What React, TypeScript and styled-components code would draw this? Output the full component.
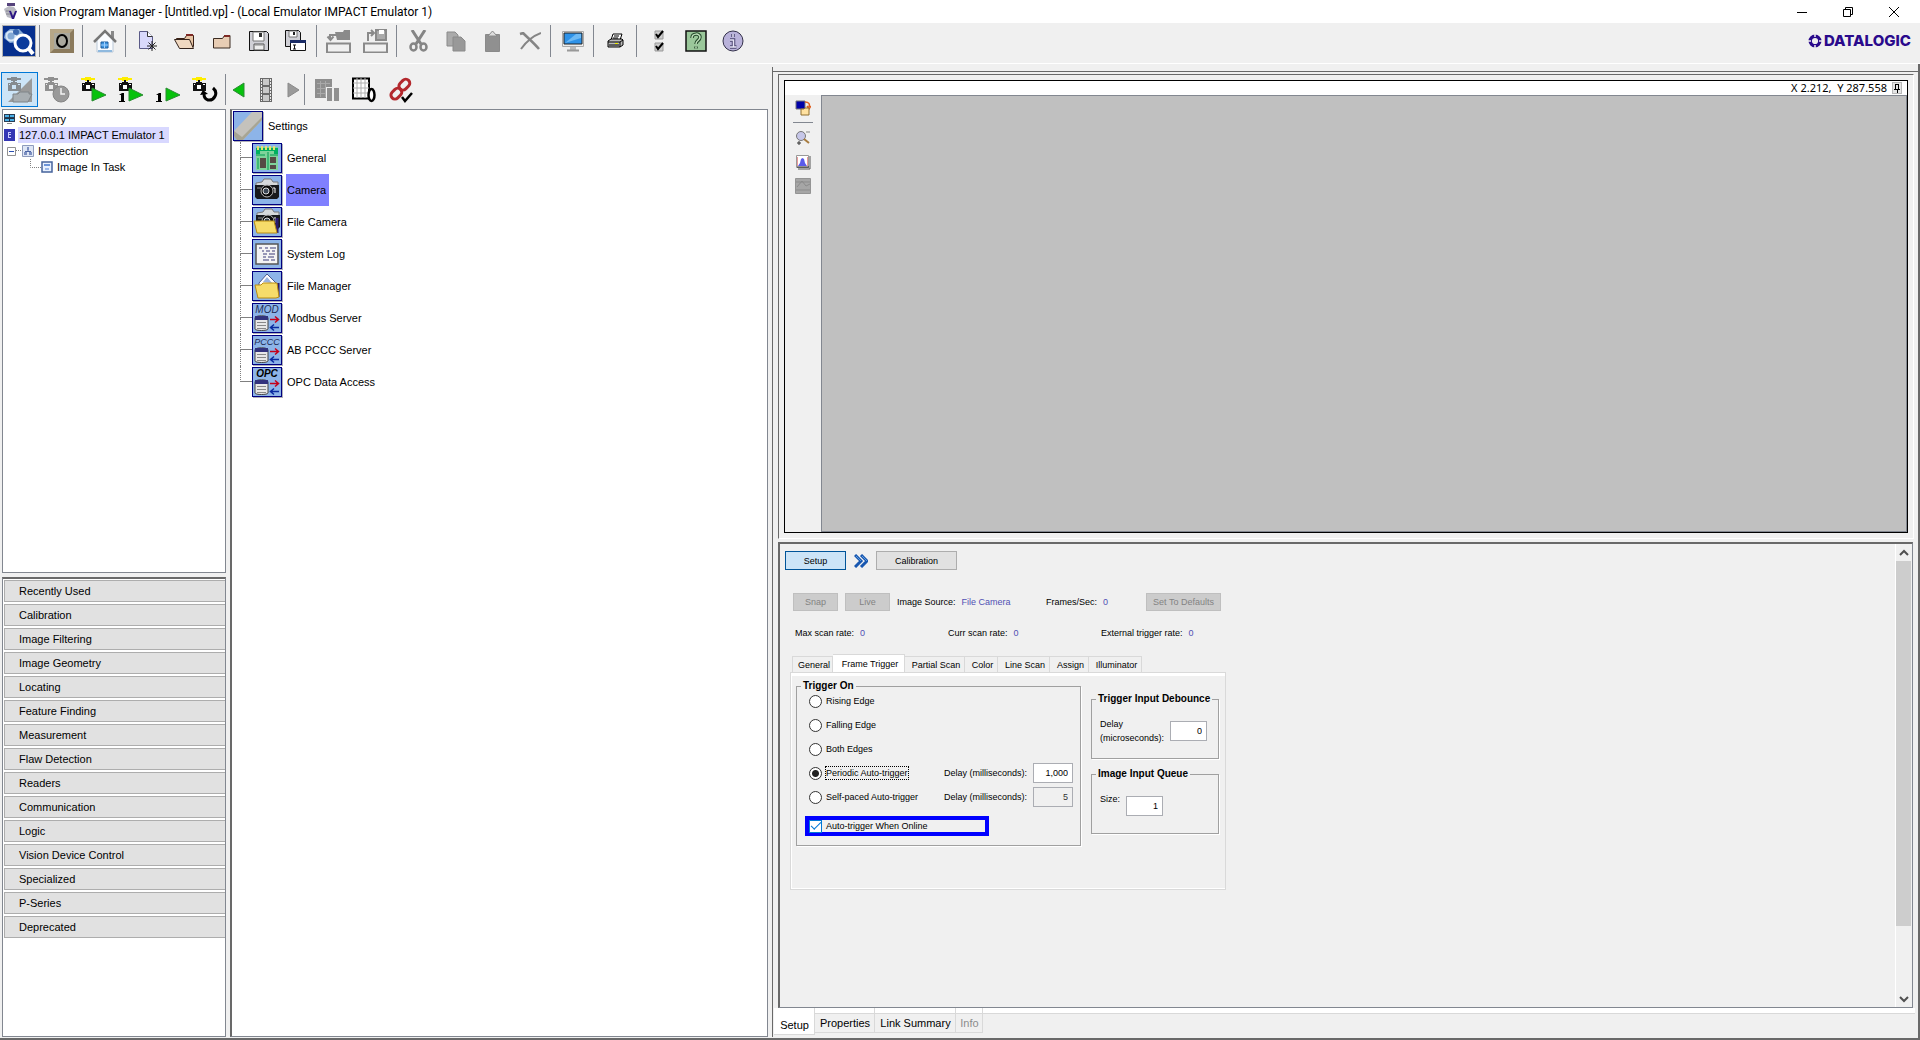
import React, { useState } from "react";
import styled, { createGlobalStyle, css } from "styled-components";

const face = "#f0f0f0";
const line = "#828790";
const dark = "#696969";
const ui = '"Liberation Sans", Arial, sans-serif';

const GlobalStyle = createGlobalStyle`
  * { box-sizing: border-box; }
  body { margin: 0; background: ${face}; color: #000; font: 11px/16px ${ui}; overflow: hidden; }
  button, input { font: inherit; color: inherit; margin: 0; padding: 0; border: 0; border-radius: 0; background: none; }
  svg { display: block; flex: none; }
  ul { list-style: none; margin: 0; padding: 0; }
`;

/* ---------- window frame ---------- */

const Window = styled.div`
  display: flex;
  flex-direction: column;
  height: 100vh;
`;

const TitleBar = styled.header`
  display: flex;
  align-items: center;
  flex: none;
  height: 23px;
  padding: 0 3px 0 4px;
  background: #fff;
`;

const Title = styled.h1`
  flex: 1;
  margin: 0 0 0 5px;
  font: 12px/20px Roboto, "Open Sans", sans-serif;
`;

const WindowButton = styled.button`
  display: grid;
  place-items: center;
  width: 46px;
  height: 20px;
`;

const Bar = styled.div`
  display: flex;
  align-items: flex-start;
  flex: none;
  height: 41px;
  padding: 2px 9px 0 0;
  border-bottom: 1px solid #fff;
`;

const RunBar = styled.div`
  display: flex;
  align-items: flex-start;
  flex: none;
  height: 45px;
  padding: 8px 0 0 1px;
`;

const ToolButton = styled.button<{ $on?: boolean; $narrow?: boolean; $tall?: boolean }>`
  display: grid;
  place-items: center;
  flex: none;
  width: ${(p) => (p.$narrow ? 18 : 37)}px;
  height: ${(p) => (p.$tall ? 35 : 32)}px;
  ${(p) => p.$on && css`background: #cce4f7; border: 1px solid #0078d7;`}
`;

const Separator = styled.span<{ $tall?: boolean }>`
  flex: none;
  width: 1px;
  height: ${(p) => (p.$tall ? 31 : 32)}px;
  margin: ${(p) => (p.$tall ? 2 : 0)}px 3px 0 2px;
  background: ${line};
`;

const Brand = styled.div`
  display: flex;
  align-items: center;
  gap: 2px;
  margin-left: auto;
  height: 32px;
  color: #2a0a8c;
  font: 800 15px/16px Inter, sans-serif;
`;

const Body = styled.main`
  display: grid;
  grid-template-columns: 40vw minmax(0, 1fr);
  flex: 1;
  min-height: 0;
  padding-bottom: 1px;
  border-right: 2px solid ${dark};
  border-bottom: 2px solid ${dark};
`;

const LeftSide = styled.section`
  display: flex;
  flex-direction: column;
  min-height: 0;
`;

const Columns = styled.div`
  display: grid;
  grid-template-columns: 224px minmax(0, 1fr);
  gap: 4px;
  flex: 1;
  min-height: 0;
  padding-left: 2px;
`;

const Stack = styled.div`
  display: grid;
  grid-template-rows: 464px minmax(0, 1fr);
  gap: 4px;
  min-height: 0;
`;

const Pane = styled.div<{ $heavyLeft?: boolean; $heavyTop?: boolean }>`
  min-height: 0;
  overflow: hidden;
  background: #fff;
  border: 1px solid ${line};
  ${(p) => p.$heavyLeft && css`border-left: 2px solid ${dark};`}
  ${(p) => p.$heavyTop && css`border-top: 2px solid ${dark};`}
`;

/* ---------- trees ---------- */

const DeviceTree = styled.ul`
  padding-top: 1px;
`;

const TreeRow = styled.li<{ $indent: number }>`
  display: flex;
  align-items: center;
  height: 16px;
  padding-left: ${(p) => p.$indent}px;
`;

const TreeLabel = styled.span<{ $selected?: boolean }>`
  margin-left: 3px;
  padding: 0 4px 0 1px;
  background: ${(p) => (p.$selected ? "#d8d8ff" : "transparent")};
`;

const SettingRow = styled.li`
  display: flex;
  align-items: center;
  height: 32px;
  padding-left: 1px;
`;

const Branch = styled.span<{ $last?: boolean }>`
  display: grid;
  grid-template-rows: 16px 16px;
  width: 12px;
  margin-left: 7px;
  &::before { content: ""; border-left: 1px dotted #808080; border-bottom: 1px solid #808080; }
  &::after { content: ""; border-left: ${(p) => (p.$last ? "0" : "1px dotted #808080")}; }
`;

const SettingIcon = styled.span`
  display: grid;
  width: 30px;
  height: 30px;
  background: #8db4e8;
  border: 1px solid #000080;
  box-shadow: 1px 1px 0 #b0b0b8;
`;

const SettingLabel = styled.span<{ $selected?: boolean }>`
  margin-left: 4px;
  padding: 0 3px 0 1px;
  line-height: 32px;
  background: ${(p) => (p.$selected ? "#8080ff" : "transparent")};
`;

const Palette = styled.div`
  display: grid;
  gap: 2px;
  padding: 1px 0 0 1px;
`;

const PaletteButton = styled.button`
  height: 22px;
  padding-left: 14px;
  text-align: left;
  background: #e1e1e1;
  border: 1px solid #adadad;
  border-right: 0;
`;

/* ---------- right side ---------- */

const RightSide = styled.section`
  display: flex;
  flex-direction: column;
  min-height: 0;
  margin: 3px 0 0 4px;
  border-left: 1px solid ${dark};
`;

const RightTop = styled.div`
  flex: none;
  height: 5px;
  border-bottom: 1px solid ${dark};
`;

const ViewFrame = styled.div`
  display: flex;
  flex: 459 1 0;
  min-height: 0;
  margin: 2px 4px 0 5px;
  padding: 5px;
  border: 1px solid #fff;
  border-top-color: ${dark};
  border-left-color: ${dark};
`;

const Viewer = styled.div`
  display: grid;
  grid-template: 14px minmax(0, 1fr) / 36px minmax(0, 1fr);
  flex: 1;
  border: 1px solid #000;
`;

const Coordinates = styled.output`
  display: flex;
  grid-column: 1 / -1;
  justify-content: flex-end;
  align-items: center;
  gap: 5px;
  padding-right: 5px;
  background: #fff;
  white-space: pre;
  font: 11px/14px "Noto Sans", Verdana, sans-serif;
`;

const PinButton = styled.button`
  display: grid;
  place-items: center;
  width: 10px;
  height: 12px;
  background: #e4e4e4;
  border: 1px solid #b8b8b8;
`;

const ViewTools = styled.div`
  display: flex;
  flex-direction: column;
  align-items: center;
  gap: 8px;
  padding-top: 5px;
`;

const ViewToolButton = styled.button`
  width: 16px;
  height: 16px;
`;

const ViewRule = styled.span`
  width: 20px;
  height: 1px;
  margin: -2px 0 -1px;
  background: ${line};
`;

const Canvas = styled.div`
  background: #c0c0c0;
  border: 1px solid ${line};
`;

const SetupFrame = styled.div`
  display: flex;
  flex: 469 1 0;
  min-height: 0;
  margin: 3px 5px 0 5px;
  border: 1px solid ${line};
  border-left: 2px solid ${dark};
  border-top: 2px solid ${dark};
`;

const SetupContent = styled.div`
  flex: 1;
  padding: 7px 0 0 5px;
  font-size: 9px;
  line-height: 14px;
`;

const ScrollTrack = styled.div`
  display: flex;
  flex-direction: column;
  align-items: stretch;
  width: 17px;
  border-left: 1px solid #fff;
`;

const ScrollButton = styled.button`
  display: grid;
  place-items: center;
  height: 17px;
`;

const ScrollLane = styled.div`
  flex: 1;
  padding-right: 1px;
`;

const ScrollThumb = styled.div`
  height: 85%;
  background: #cdcdcd;
`;

const Line = styled.div<{ $top?: number; $left?: number }>`
  display: flex;
  align-items: center;
  padding: ${(p) => p.$top ?? 0}px 0 0 ${(p) => p.$left ?? 0}px;
`;

const StepButton = styled.button<{ $active?: boolean; $wide?: boolean }>`
  width: ${(p) => (p.$wide ? 81 : 61)}px;
  height: 19px;
  background: ${(p) => (p.$active ? "#cce4f7" : "#e1e1e1")};
  border: 1px solid ${(p) => (p.$active ? "#005499" : "#adadad")};
`;

const StepArrow = styled.span`
  padding: 0 8px;
`;

const GreyButton = styled.button<{ $wide?: boolean }>`
  width: ${(p) => (p.$wide ? 75 : 45)}px;
  height: 18px;
  margin-right: ${(p) => (p.$wide ? 0 : 7)}px;
  white-space: nowrap;
  color: #838383;
  background: #cccccc;
  border: 1px solid #bfbfbf;
`;

const Reading = styled.span<{ $width: number }>`
  flex: none;
  width: ${(p) => p.$width}px;
  white-space: nowrap;
`;

const Value = styled.span`
  margin-left: 6px;
  color: #5050b4;
`;

const TabList = styled.div`
  display: flex;
  align-items: flex-end;
  height: 18px;
  padding-left: 2px;
`;

const Tab = styled.button<{ $active?: boolean; $width: number }>`
  width: ${(p) => p.$width}px;
  height: ${(p) => (p.$active ? 18 : 16)}px;
  padding-left: 3px;
  white-space: nowrap;
  background: ${(p) => (p.$active ? "#fff" : face)};
  border: 1px solid #d9d9d9;
  border-bottom: 0;
  & + & { border-left-width: ${(p) => (p.$active ? 1 : 0)}px; }
`;

const TabPanel = styled.div`
  display: flex;
  align-items: flex-start;
  gap: 10px;
  width: 436px;
  height: 218px;
  padding: 6px 6px 0 5px;
  border: 1px solid #d9d9d9;
  box-shadow: inset 0 3px 0 #fff, inset 1px 0 0 #fff, inset 0 -1px 0 #fff;
`;

const Group = styled.fieldset<{ $width: number; $height: number }>`
  width: ${(p) => p.$width}px;
  height: ${(p) => p.$height}px;
  min-width: 0;
  margin: 0;
  padding: 0 7px 0 8px;
  border: 1px solid #a0a0a0;
  box-shadow: 1px 1px 0 #fff;
`;

const Legend = styled.legend`
  margin: 0 -6px 0 -4px;
  padding: 0 2px;
  font: bold 10px/14px ${ui};
  white-space: nowrap;
`;

const SideGroups = styled.div`
  display: grid;
  gap: 8px;
  padding-top: 13px;
`;

const Choices = styled.div`
  display: grid;
  grid-auto-rows: 24px;
  margin: -4px 0 0 4px;
`;

const ChoiceRow = styled.div`
  display: flex;
  align-items: center;
  justify-content: space-between;
`;

const ChoiceLabel = styled.label`
  display: flex;
  align-items: center;
  gap: 4px;
  white-space: nowrap;
`;

const Focusable = styled.span<{ $focus?: boolean }>`
  line-height: 12px;
  ${(p) => p.$focus && css`outline: 1px dotted #000;`}
`;

const Radio = styled.input`
  appearance: none;
  width: 13px;
  height: 13px;
  background: #fff;
  border: 1px solid #333;
  border-radius: 50%;
  &:checked { background: radial-gradient(circle, #222 0 3px, #fff 4px); }
`;

const Tick = styled.input`
  appearance: none;
  display: grid;
  place-items: center;
  width: 13px;
  height: 13px;
  background: #fff;
  border: 1px solid #0078d7;
  &:checked::after {
    content: "";
    width: 9px;
    height: 4px;
    margin-top: -3px;
    border: solid #0078d7;
    border-width: 0 0 1px 1px;
    transform: rotate(-45deg);
  }
`;

const Highlight = styled.div`
  display: flex;
  align-items: center;
  width: 184px;
  height: 20px;
  margin-top: 7px;
  border: 4px solid #0000ff;
`;

const DelayLabel = styled.label`
  display: flex;
  align-items: center;
  gap: 6px;
  white-space: nowrap;
`;

const NumberBox = styled.input<{ $wide?: boolean }>`
  width: ${(p) => (p.$wide ? 40 : 37)}px;
  height: 20px;
  padding-right: 4px;
  text-align: right;
  background: #fff;
  border: 1px solid #abadb3;
  &:disabled { background: ${face}; color: #333; }
`;

const SideField = styled.label`
  display: flex;
  align-items: flex-start;
  gap: 6px;
  padding-top: 11px;
  ${NumberBox} { margin-top: 4px; }
`;

const BottomTabs = styled.nav`
  display: flex;
  align-items: flex-start;
  flex: none;
  height: 29px;
  padding-left: 1px;
`;

const BottomFill = styled.div`
  flex: 1;
  height: 6px;
  margin-right: 3px;
  background: #fff;
  border-bottom: 1px solid #d9d9d9;
`;

const BottomTab = styled.button<{ $active?: boolean; $width: number }>`
  width: ${(p) => p.$width}px;
  height: ${(p) => (p.$active ? 27 : 25)}px;
  padding: ${(p) => (p.$active ? 7 : 5)}px 0 0 1px;
  background: ${(p) => (p.$active ? "#fff" : `linear-gradient(#fff 5px, #d9d9d9 5px, #d9d9d9 6px, ${face} 6px)`)};
  border: solid #d9d9d9;
  border-width: 0 1px 1px 0;
  &:disabled { color: #8c8c8c; }
`;

/* ---------- drawings ---------- */

const grey = "#8a8a8a";
const svg = (w: number, h: number, body: React.ReactNode, crisp = false) => (
  <svg width={w} height={h} viewBox={`0 0 ${w} ${h}`} fill="none" shapeRendering={crisp ? "crispEdges" : "auto"} aria-hidden="true">{body}</svg>
);

const Cam = ({ c = "#111", y = "#ffee00", lens = "#fff" }: { c?: string; y?: string; lens?: string }) => (
  <g shapeRendering="crispEdges">
    <path d="M0 1h14v2H0zM4 0h6v4H4z" fill={y} /><path d="M6 3h2v2H6z" fill={c} />
    <path d="M1 6h3V5h6v1h4v8H1z" fill={c} /><path d="M5 8h4v4H5zM2 7h1v1H2zM11 7h2v1h-2z" fill={lens} />
  </g>
);
const play = (x: number, y: number) => <path d={`M${x} ${y}l14 7-14 6z`} fill="#06c20c" stroke="#2a8b32" />;
const one = (x: number, y: number) => <path d={`M${x} ${y + 2}l3-2h2v8h1v1h-6v-1h2v-6h-2z`} fill="#000" />;

const I: Record<string, React.ReactNode> = {
  app: svg(14, 18, <><path d="M3 0h8v3H3z" fill="#56437c" /><path d="M0 6l5-3 5 1 3 4-4 8-6-2z" fill="#b9b9c2" /><path d="M2 8h5M2 11h4" stroke="#84848e" /><path d="M5 8h2l2 5 2-5h2l-3 8H8z" fill="#2b1583" /></>),
  min: svg(10, 10, <path d="M0 5.5h10" stroke="#000" />),
  max: svg(10, 10, <path d="M.5 2.5h7v7h-7zM2.500 2V.5h7v7H8" stroke="#000" />),
  close: svg(10, 10, <path d="M0 0l10 10M10 0L0 10" stroke="#000" />),
  vision: svg(34, 32, <><path d="M0 0h34v32H0z" fill="#062f8e" stroke="#b2b2b2" strokeWidth="2" /><path d="M3 8l5-4h9l4 4-5 9-8 1-6-5z" fill="#84a9d5" /><circle cx="9" cy="11" r="4.500" stroke="#d7e6f7" strokeWidth="2" /><circle cx="14" cy="7" r="3" fill="#3b68ae" /><circle cx="21" cy="18" r="8" fill="#0b3b9c" stroke="#fff" strokeWidth="3" /><path d="M27 24l4 5" stroke="#fff" strokeWidth="4" /></>),
  offline: svg(24, 24, <><path d="M0 0h24v24H0z" fill="#8b7a5c" /><path d="M0 0h24l-4 4H4v16l-4 4z" fill="#b5a687" /><path d="M4 4h16v16H4z" fill="#a9a89e" /><ellipse cx="12" cy="12" rx="5" ry="6" stroke="#000" strokeWidth="2" /></>),
  home: svg(24, 24, <><path d="M18 2h3v8h-3z" fill="#888" /><path d="M4 11l8-8 8 8v12H4z" fill="#fafcff" stroke="#b9c8d8" /><path d="M1 13L12 2l11 11" stroke="#777" strokeWidth="2.500" /><path d="M8 13h7v6H8z" fill="#3e94e0" stroke="#1e5f9f" /><path d="M11.500 13v6M8 16h7" stroke="#9fd0ff" /><path d="M5 22h14" stroke="#8fb9de" strokeWidth="2" /></>),
  newDoc: svg(20, 22, <><path d="M1.500 1.500h8l5 5v12h-13z" fill="#d9d9fb" stroke="#5a5a88" /><path d="M9.500 1.500v5h5" fill="#fff" stroke="#333" /><path d="M14 11v10M9 16h10M10.500 12.500l7 7M17.500 12.500l-7 7" stroke="#222" /></>),
  open: svg(22, 18, <><path d="M2.500 6.500h8l2-3h7v11h-14z" fill="#e7c5a5" stroke="#3a2015" /><path d="M12 3h7" stroke="#7e2a25" strokeWidth="2" /><path d="M.5 7.500h15l4 9h-14z" fill="#f0d8c0" stroke="#33231b" /></>),
  folder: svg(18, 16, <><path d="M.5 5.500h9l2-3h5.500v12.500H.5z" fill="#e8cdb4" stroke="#3a2a20" /><path d="M11 3h6" stroke="#7e2a25" strokeWidth="2" /></>),
  save: svg(20, 20, <><path d="M.5.5h17l2 2v17H.5z" fill="#d0d0d6" stroke="#111" /><path d="M4 1h11v9H4z" fill="#fff" stroke="#777" /><path d="M10 2h3v4h-3z" fill="#333" /><path d="M5 13h10v6H5z" fill="#eee" stroke="#555" /><path d="M6 14h8" stroke="#888" /></>),
  saveAll: svg(21, 22, <><path d="M.5.5h13l2 2v14H.5z" fill="#d0d0d6" stroke="#111" /><path d="M4 1h8v6H4z" fill="#fff" stroke="#777" /><path d="M8 2h2v3H8z" fill="#222" /><path d="M5.500 10.500h15v10h-15z" fill="#fff" stroke="#111" /><path d="M5 10h16v3H5z" fill="#1b2c66" /><path d="M8 15h3M9.500 15v4M8 19h3" stroke="#111" /></>),
  upload: svg(25, 24, <><path d="M1 14.500h23v9H1z" stroke={grey} strokeWidth="2" /><path d="M9 3h8l1-2h6v10H11z" fill={grey} /><path d="M4 10V6h6M1.500 7.500L4.500 11l3-3.500" stroke={grey} strokeWidth="2" /></>),
  download: svg(25, 24, <><path d="M1 14.500h23v9H1z" stroke={grey} strokeWidth="2" /><path d="M13 1h10v10H13z" fill="#aaa" stroke={grey} strokeWidth="2" /><path d="M16 1h5v4h-5z" fill="#fff" /><path d="M5 12V4h5M8 1l3 3-3 3" stroke={grey} strokeWidth="2" /></>),
  cut: svg(19, 22, <><path d="M3 0l9 14M16 0L7 14" stroke="#858585" strokeWidth="3" /><ellipse cx="4.500" cy="17" rx="3" ry="3.500" stroke="#858585" strokeWidth="2.500" /><ellipse cx="14.500" cy="17" rx="3" ry="3.500" stroke="#858585" strokeWidth="2.500" /></>),
  copy: svg(20, 21, <><path d="M1 1h8l3 3v11H1z" fill="#aaa" stroke={grey} /><path d="M7 6h8l4 4v10H7z" fill="#999" stroke={grey} /></>),
  paste: svg(15, 22, <><path d="M.5 4.500h14v17H.5z" fill="#909090" stroke={grey} /><path d="M3 6l4.500-5L12 6z" fill="#ddd" stroke={grey} /></>),
  del: svg(22, 18, <><path d="M1 2l3-1c5 5 10 9 16 16" stroke="#858585" strokeWidth="2.500" /><path d="M22 1C14 4 7 10 2 17" stroke="#858585" strokeWidth="2" /></>),
  monitor: svg(22, 22, <><path d="M.5 1.500h21v15H.5z" fill="#ececec" stroke="#aaa" /><path d="M2 3h18v11H2z" fill="#2e92e8" stroke="#222" /><path d="M3 13L14 4h5v4z" fill="#6db9f4" /><path d="M8 17h6v3H8z" fill="#bbb" /><path d="M5 20.500h12" stroke="#999" strokeWidth="2" /></>),
  print: svg(17, 16, <><path d="M6 1h9l-2 6H4z" fill="#fff" stroke="#000" /><path d="M7 3h5M6 5h5" stroke="#000" /><path d="M1 8l3-2h11l1 1v5l-3 2H1z" fill="#bbb" stroke="#000" /><path d="M1 9h12v5M13 9l3-2M2 12h10" stroke="#000" /><path d="M8 10h3v1H8z" fill="#ee0" /></>),
  checks: svg(10, 22, <><path d="M1 1h8v8H1zM1 13h8v8H1z" fill="#ccc" stroke="#999" /><path d="M2 4l2 3 5-6M2 16l2 3 5-6" stroke="#000" strokeWidth="2" /></>),
  help: svg(22, 22, <><path d="M1 1h20v20H1z" fill="#9ac79a" stroke="#111" strokeWidth="1.500" /><path d="M7 8c0-5 8-5 8-1 0 4-4 3-4 7M11 16.500v2" stroke="#254a2c" strokeWidth="3.500" /><path d="M7 8c0-5 8-5 8-1 0 4-4 3-4 7M11 16.500v2" stroke="#bfe0bb" strokeWidth="1.500" /></>),
  info: svg(22, 22, <><circle cx="11" cy="11" r="10" fill="#b9b2da" stroke="#33304a" /><path d="M11 4v3M8 10h3.500v7M8 17h6.500" stroke="#4b4670" strokeWidth="3.500" /><path d="M11 4v3M8 10h3.500v7M8 17h6.500" stroke="#e6e3f6" strokeWidth="1.500" /></>),
  brand: svg(14, 14, <><circle cx="7" cy="7" r="4.800" stroke="#2a0a8c" strokeWidth="3.400" /><path d="M7 0v3M7 11v3M0 7h3M11 7h3" stroke={face} strokeWidth="1.500" /></>),
  runOnline: svg(26, 26, <><path d="M25 1v24H1z" fill="#9a9a9a" /><Cam c="#858b90" y="#858b90" lens="#cce4f7" /><path d="M6 17h5l2-2h9v2h3l-4 8H6z" fill="#a8aeb2" stroke="#7e8488" /></>),
  runTimed: svg(26, 26, <><Cam c="#909090" y="#909090" lens="#eee" /><circle cx="17" cy="17" r="8" fill="#9a9a9a" stroke="#858585" /><path d="M17 11v6h4" stroke="#f4f4f4" strokeWidth="1.500" /></>),
  runCam: svg(26, 26, <><Cam />{play(11, 11)}</>),
  runOnce: svg(26, 26, <><Cam />{one(1, 16)}{play(11, 11)}</>),
  one: svg(26, 26, <>{one(1, 16)}{play(11, 11)}</>),
  loop: svg(26, 26, <><Cam /><path d="M21 11c6 5 1 13-5 12-3-1-4-3-4-6" stroke="#000" strokeWidth="3" /><path d="M8 18l3-5 5 4z" fill="#000" /></>),
  prev: svg(13, 16, <path d="M12 1v14L1 8z" fill="#06c20c" stroke="#2a8b32" />),
  film: svg(14, 24, <><path d="M1 0h12v24H1z" fill="#6a6a6a" /><path d="M2.500 1v22M11.500 1v22" stroke="#eee" strokeDasharray="2 1" /><path d="M4 1h6v6H4zM4 9h6v6H4zM4 17h6v6H4z" fill="#c9c9c9" /></>, true),
  next: svg(13, 16, <path d="M1 1v14l11-7z" fill="#9a9a9a" stroke="#8a8a8a" />),
  tablePause: svg(26, 24, <><path d="M1 1h17v19H1z" fill="#8e8e8e" /><path d="M3 5h13M3 10h13M3 15h13M6 3v16M11 3v16" stroke="#a9a9a9" /><path d="M12 9h7v15h-7zM19 9h7v15h-7z" fill="#efefef" /><path d="M13 10h5v13h-5zM20 10h5v13h-5z" fill="#909090" /></>, true),
  tableZero: svg(26, 26, <><path d="M2 1.500h16v20H2z" fill="#fff" stroke="#000" strokeWidth="2" /><path d="M2 6h16M2 11h16M2 16h16M6 1v20M10 1v20M14 1v20" stroke="#b0b0b0" /><ellipse cx="20.500" cy="18" rx="3" ry="6" fill="#fff" stroke="#000" strokeWidth="2.500" /></>),
  link: svg(26, 26, <><g stroke="#b3282d" strokeWidth="3"><rect x="-5.500" y="-4" width="12" height="8" rx="4" transform="translate(8 17) rotate(-45)" /><rect x="-5.500" y="-4" width="12" height="8" rx="4" transform="translate(16 8) rotate(-45)" /></g><path d="M14 20l3 4 7-8" stroke="#000" strokeWidth="2.500" /></>),
  tSummary: svg(11, 12, <><path d="M0 1h11v8H0z" fill="#2a3d55" /><path d="M1 2h9v2H1zM1 5h9v3H1z" fill="#4ab0e8" /><path d="M5 1v8M1 5h9" stroke="#1d3145" /><path d="M3 10h5v1H3z" fill="#888" /></>, true),
  tDevice: svg(11, 12, <><path d="M0 0h11v12H0z" fill="#3437b4" /><path d="M7 3H4v5h3M4 5.500h3" stroke="#c8caff" /></>, true),
  tMinus: svg(9, 9, <><path d="M.5.5h8v8h-8z" fill="#fff" stroke="#919191" /><path d="M2 4.500h5" stroke="#2a4fb0" /></>),
  tTask: svg(12, 12, <><path d="M.5.500h11v11H.5z" fill="#dfe6f5" stroke="#8e9bbd" /><path d="M5 2h2v3H5zM2 7h3v3H2zM7 7h3v3H7z" fill="#7c8fc0" /><path d="M6 5v1M3 6.500h6" stroke="#4a64a5" /></>),
  tImage: svg(12, 12, <><path d="M1 1h10v10H1z" fill="#e8f1ff" stroke="#46639c" strokeWidth="1.500" /><path d="M3 3h6v2H3z" fill="#6d95d9" /><path d="M4 7h4v2H4z" fill="#9bb7e8" /></>),
  vLoad: svg(16, 16, <><path d="M1 1h9v8H1z" fill="#0000a8" stroke="#777" /><path d="M10 2c4 0 5 2 4 5M12 6l2 3 2-3" stroke="#e06020" strokeWidth="1.500" /><path d="M6 9h3l1-1h4v7H6z" fill="#ffe1a0" stroke="#8f6e30" /></>),
  vZoom: svg(16, 16, <><circle cx="6" cy="6" r="4.500" fill="#c6c6e8" stroke="#777" /><path d="M9 9l5 4" stroke="#a77c40" strokeWidth="2" /><path d="M11 2h4" stroke="#888" /><path d="M2 13h4M4 11v4" stroke="#333" /></>),
  vHist: svg(16, 16, <><path d="M1.500 1.500h12v12h-12z" fill="#fff" stroke="#999" /><path d="M2.500 3v9M12.500 3v9" stroke="#e79a9a" /><path d="M3 12l2-3 1-4 1.500-1L9 5l1 4 2 3z" fill="#5a5aea" /><path d="M2 13h12" stroke="#222" /><path d="M15 2v13H3" stroke="#555" /></>),
  vLine: svg(16, 16, <><path d="M.5.500h15v15H.5z" fill="#a6a6a6" stroke="#949494" /><path d="M1 4h14M1 12h14M2 9l5-6 4 5 4-2" stroke="#8b8b8b" /></>),
  pin: svg(6, 9, <path d="M1.500 0v5M4.500 0v5M0 5.500h6M3 6v3M1 .5h4" stroke="#000" />, true),
  chevrons: svg(14, 14, <><path d="M1 1l6 6-6 6M7 1l6 6-6 6" stroke="#1857b0" strokeWidth="3" /><path d="M2 2l5 5M8 2l5 5" stroke="#5a9ade" /></>),
  up: svg(10, 8, <path d="M1 6l4-4 4 4" stroke="#505050" strokeWidth="2" />),
  down: svg(10, 8, <path d="M1 2l4 4 4-4" stroke="#505050" strokeWidth="2" />),
};

const camera = <><path d="M9 6l2-3h7l2 3h5v4H3V7z" fill="#d6d9dc" stroke="#777" /><path d="M2 9h24v12l-2 2H4l-2-2z" fill="#17191c" /><circle cx="14" cy="15" r="6" fill="#0a0a0a" stroke="#bbb" /><circle cx="13" cy="15" r="3" fill="#3a4654" stroke="#ddd" /><path d="M20 12h2v5" stroke="#fff" /><path d="M4 11h4v2H4z" fill="#555" /></>;
const openFolder = <path d="M2 13h6l2-2h14l2 14-3 1H5z" fill="#f6dc6a" stroke="#b98d12" />;
const server = (name: string, bold?: boolean) => (
  <><text x="14" y="9" textAnchor="middle" fill={bold ? "#000" : "#1d2b55"} fontFamily="Liberation Sans, Arial, sans-serif" fontSize={name === "PCCC" ? 9 : 10} fontStyle="italic" fontWeight={bold ? "bold" : "normal"}>{name}</text>
    <path d="M2 14c0-3 13-3 13 0v11c0 2-13 2-13 0z" fill="#e8e8e8" stroke="#444" /><path d="M2 12h13v4H2z" fill="#33337d" /><path d="M4 18.500h9M4 21.500h9M4 24.500h9" stroke="#888" />
    <path d="M17 15.500h8M22 12.500l3.500 3-3.500 3" stroke="#c4001a" strokeWidth="1.500" /><path d="M26 23.500h-8M21 20.500l-3.500 3 3.500 3" stroke="#0a2aa0" strokeWidth="1.500" /></>
);
const S: Record<string, React.ReactNode> = {
  Settings: <><path d="M0 19L18 0h10v8L9 28H3l-3-4z" fill="#c4c2bc" /><path d="M0 19l8 6L28 5v3L9 28H3l-3-4z" fill="#a7a594" /></>,
  General: <><path d="M3 3h22v23H3z" fill="#7fd49b" /><path d="M3 4h22v6h-4v-3H7v3H3z" fill="#00b060" /><path d="M4 2h2v4H4zM8 2h2v4H8zM12 2h2v4h-2zM16 2h2v4h-2zM20 2h2v4h-2z" fill="#e8e070" /><path d="M7 14h6v10H7zM17 13h6v6h-6zM17 21h6v4h-6z" fill="#554b44" /><path d="M15 8v18M3 11h9M17 11h8M5 14v11" stroke="#009a50" /></>,
  Camera: camera,
  "File Camera": <><g transform="translate(1 -2)">{camera}</g><path d="M24 10v15" stroke="#2a1a70" strokeWidth="3" /><path d="M1 13h20l3 12H4z" fill="#f6dc6a" stroke="#b98d12" /></>,
  "System Log": <><path d="M3 4h22v20H3z" fill="#f4f4f4" stroke="#555" strokeWidth="1.500" /><path d="M6 8h3M12 8h3M17 8h6M9 11h2M13 11h4M19 11h3M10 14h4M16 14h6M10 17h3M15 17h6M10 20h6M18 20h4" stroke="#3b3b78" /></>,
  "File Manager": <><path d="M6 11L14 2l9 9v4H6z" fill="#fff" stroke="#4a5a90" /><path d="M10 10l4-5 5 6" fill="#9bb3e0" /><path d="M25 11v14" stroke="#2a1a70" strokeWidth="3" />{openFolder}</>,
  "Modbus Server": server("MOD"),
  "AB PCCC Server": server("PCCC"),
  "OPC Data Access": server("OPC", true),
};

/* ---------- data ---------- */

const mainTools = [
  "vision:Vision Program Manager", "|", "offline:Offline", "|", "home:Home", "|", "newDoc:New", "open:Open", "folder:Close", "save:Save", "saveAll:Save As", "|",
  "upload:Load", "download:Store", "|", "cut:Cut", "copy:Copy", "paste:Paste", "del:Delete", "|", "monitor:Display", "|", "print:Print", "|", "checks:Options", "help:Help", "info:About",
];
const runTools = [
  "runOnline:Online", "runTimed:Timed", "runCam:Run", "runOnce:Run Once", "one:Step", "loop:Repeat", "|", "prev:Previous", "film:Film strip", "next:Next", "|",
  "tablePause:Pause table", "tableZero:Reset table", "link:Check links",
];
const settings = ["General", "Camera", "File Camera", "System Log", "File Manager", "Modbus Server", "AB PCCC Server", "OPC Data Access"];
const palette = ["Recently Used", "Calibration", "Image Filtering", "Image Geometry", "Locating", "Feature Finding", "Measurement", "Flaw Detection", "Readers", "Communication", "Logic", "Vision Device Control", "Specialized", "P-Series", "Deprecated"];
const tabs: [string, number][] = [["General", 41], ["Frame Trigger", 72], ["Partial Scan", 60], ["Color", 33], ["Line Scan", 52], ["Assign", 39], ["Illuminator", 53]];
const triggers = ["Rising Edge", "Falling Edge", "Both Edges", "Periodic Auto-trigger", "Self-paced Auto-trigger"];
const delays: Record<string, string> = { "Periodic Auto-trigger": "1,000", "Self-paced Auto-trigger": "5" };

function Tools({ items, tall }: { items: string[]; tall?: boolean }) {
  return (
    <>
      {items.map((item, i) => {
        if (item === "|") return <Separator key={i} $tall={tall} />;
        const [id, label] = item.split(":");
        return (
          <ToolButton key={i} aria-label={label} $tall={tall} $on={id === "runOnline"} $narrow={id === "prev" || id === "next"}>
            {I[id]}
          </ToolButton>
        );
      })}
    </>
  );
}

function TriggerGroup() {
  const [trigger, setTrigger] = useState("Periodic Auto-trigger");
  return (
    <Group $width={285} $height={167}>
      <Legend>Trigger On</Legend>
      <Choices>
        {triggers.map((name) => (
          <ChoiceRow key={name}>
            <ChoiceLabel>
              <Radio type="radio" name="trigger" checked={trigger === name} onChange={() => setTrigger(name)} />
              <Focusable $focus={trigger === name}>{name}</Focusable>
            </ChoiceLabel>
            {delays[name] && (
              <DelayLabel>
                Delay (milliseconds):
                <NumberBox $wide defaultValue={delays[name]} disabled={trigger !== name} />
              </DelayLabel>
            )}
          </ChoiceRow>
        ))}
      </Choices>
      <Highlight>
        <ChoiceLabel>
          <Tick type="checkbox" defaultChecked />
          Auto-trigger When Online
        </ChoiceLabel>
      </Highlight>
    </Group>
  );
}

function SetupPanel() {
  return (
    <SetupFrame>
      <SetupContent>
        <Line>
          <StepButton $active>Setup</StepButton>
          <StepArrow>{I.chevrons}</StepArrow>
          <StepButton $wide>Calibration</StepButton>
        </Line>
        <Line $top={23} $left={8}>
          <GreyButton disabled>Snap</GreyButton>
          <GreyButton disabled>Live</GreyButton>
          <Reading $width={149}>Image Source:<Value>File Camera</Value></Reading>
          <Reading $width={100}>Frames/Sec:<Value>0</Value></Reading>
          <GreyButton $wide disabled>Set To Defaults</GreyButton>
        </Line>
        <Line $top={15} $left={10}>
          <Reading $width={153}>Max scan rate:<Value>0</Value></Reading>
          <Reading $width={153}>Curr scan rate:<Value>0</Value></Reading>
          <Reading $width={153}>External trigger rate:<Value>0</Value></Reading>
        </Line>
        <Line $top={14} $left={5}>
          <TabList role="tablist">
            {tabs.map(([name, width]) => (
              <Tab key={name} role="tab" $width={width} $active={name === "Frame Trigger"}>{name}</Tab>
            ))}
          </TabList>
        </Line>
        <Line $left={5}>
          <TabPanel role="tabpanel">
            <TriggerGroup />
            <SideGroups>
              <Group $width={128} $height={67}>
                <Legend>Trigger Input Debounce</Legend>
                <SideField>
                  <span>Delay<br />(microseconds):</span>
                  <NumberBox defaultValue="0" />
                </SideField>
              </Group>
              <Group $width={128} $height={67}>
                <Legend>Image Input Queue</Legend>
                <SideField>
                  Size:
                  <NumberBox defaultValue="1" />
                </SideField>
              </Group>
            </SideGroups>
          </TabPanel>
        </Line>
      </SetupContent>
      <ScrollTrack>
        <ScrollButton aria-label="Scroll up">{I.up}</ScrollButton>
        <ScrollLane><ScrollThumb /></ScrollLane>
        <ScrollButton aria-label="Scroll down">{I.down}</ScrollButton>
      </ScrollTrack>
    </SetupFrame>
  );
}

export default function App() {
  return (
    <Window>
      <GlobalStyle />
      <TitleBar>
        {I.app}
        <Title>Vision Program Manager - [Untitled.vp] - (Local Emulator IMPACT Emulator 1)</Title>
        <WindowButton aria-label="Minimize">{I.min}</WindowButton>
        <WindowButton aria-label="Restore">{I.max}</WindowButton>
        <WindowButton aria-label="Close">{I.close}</WindowButton>
      </TitleBar>
      <Bar>
        <Tools items={mainTools} />
        <Brand>{I.brand}DATALOGIC</Brand>
      </Bar>
      <Body>
        <LeftSide>
          <RunBar>
            <Tools items={runTools} tall />
          </RunBar>
          <Columns>
            <Stack>
              <Pane>
                <DeviceTree role="tree">
                  <TreeRow $indent={1}>{I.tSummary}<TreeLabel>Summary</TreeLabel></TreeRow>
                  <TreeRow $indent={1}>{I.tDevice}<TreeLabel $selected>127.0.0.1 IMPACT Emulator 1</TreeLabel></TreeRow>
                  <TreeRow $indent={4}>
                    {I.tMinus}
                    {svg(6, 2, <path d="M0 .5h6" stroke="#808080" strokeDasharray="1 1" />)}
                    {I.tTask}
                    <TreeLabel>Inspection</TreeLabel>
                  </TreeRow>
                  <TreeRow $indent={27}>
                    {svg(11, 16, <path d="M.5 0v8.500H11" stroke="#808080" strokeDasharray="1 1" />)}
                    {I.tImage}
                    <TreeLabel>Image In Task</TreeLabel>
                  </TreeRow>
                </DeviceTree>
              </Pane>
              <Pane $heavyTop>
                <Palette>
                  {palette.map((name) => <PaletteButton key={name}>{name}</PaletteButton>)}
                </Palette>
              </Pane>
            </Stack>
            <Pane $heavyLeft>
              <ul role="tree">
                <SettingRow>
                  <SettingIcon>{svg(28, 28, S.Settings)}</SettingIcon>
                  <SettingLabel>Settings</SettingLabel>
                </SettingRow>
                {settings.map((name, i) => (
                  <SettingRow key={name}>
                    <Branch $last={i === settings.length - 1} />
                    <SettingIcon>{svg(28, 28, S[name])}</SettingIcon>
                    <SettingLabel $selected={name === "Camera"}>{name}</SettingLabel>
                  </SettingRow>
                ))}
              </ul>
            </Pane>
          </Columns>
        </LeftSide>
        <RightSide>
          <RightTop />
          <ViewFrame>
            <Viewer>
              <Coordinates>
                {"X 2.212,  Y 287.558"}
                <PinButton aria-label="Pin">{I.pin}</PinButton>
              </Coordinates>
              <ViewTools>
                <ViewToolButton aria-label="Load image">{I.vLoad}</ViewToolButton>
                <ViewRule />
                <ViewToolButton aria-label="Zoom">{I.vZoom}</ViewToolButton>
                <ViewToolButton aria-label="Histogram">{I.vHist}</ViewToolButton>
                <ViewToolButton aria-label="Line profile">{I.vLine}</ViewToolButton>
              </ViewTools>
              <Canvas />
            </Viewer>
          </ViewFrame>
          <SetupPanel />
          <BottomTabs role="tablist">
            <BottomTab role="tab" $active $width={41}>Setup</BottomTab>
            <BottomTab role="tab" $width={60}>Properties</BottomTab>
            <BottomTab role="tab" $width={81}>Link Summary</BottomTab>
            <BottomTab role="tab" $width={27} disabled>Info</BottomTab>
            <BottomFill />
          </BottomTabs>
        </RightSide>
      </Body>
    </Window>
  );
}
